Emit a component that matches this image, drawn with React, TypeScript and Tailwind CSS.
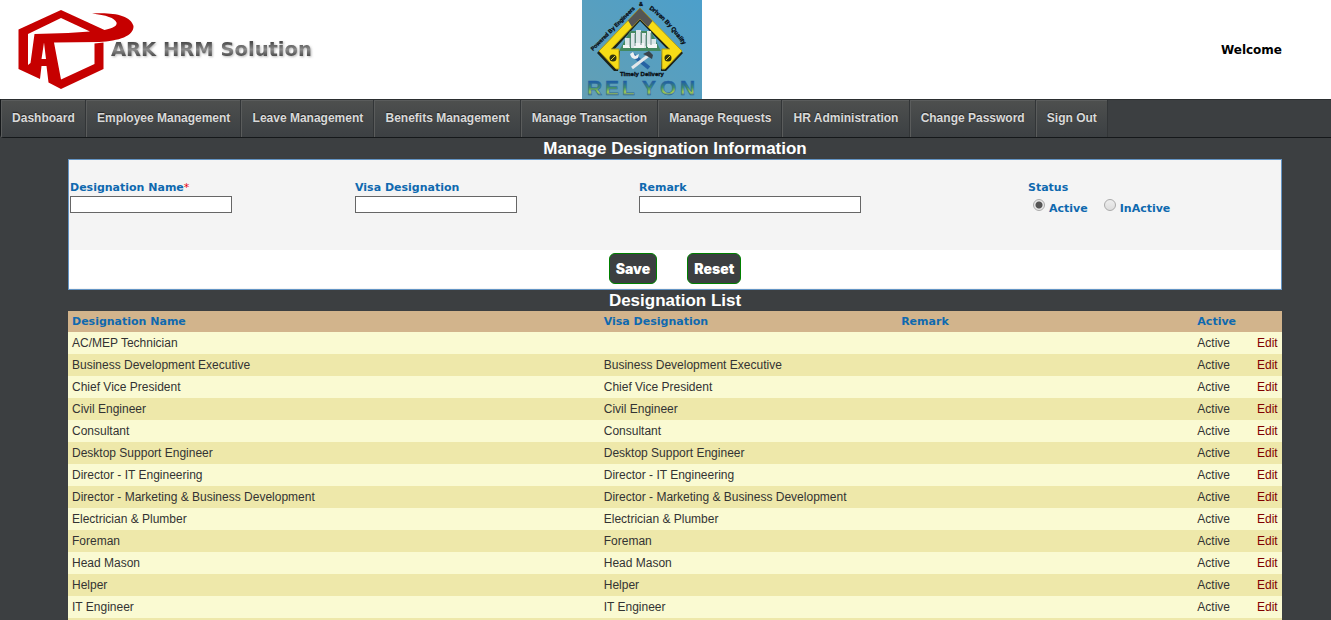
import React from "react";

const menu = [
  "Dashboard",
  "Employee Management",
  "Leave Management",
  "Benefits Management",
  "Manage Transaction",
  "Manage Requests",
  "HR Administration",
  "Change Password",
  "Sign Out",
];

const rows: [string, string][] = [
  ["AC/MEP Technician", ""],
  ["Business Development Executive", "Business Development Executive"],
  ["Chief Vice President", "Chief Vice President"],
  ["Civil Engineer", "Civil Engineer"],
  ["Consultant", "Consultant"],
  ["Desktop Support Engineer", "Desktop Support Engineer"],
  ["Director - IT Engineering", "Director - IT Engineering"],
  ["Director - Marketing & Business Development", "Director - Marketing & Business Development"],
  ["Electrician & Plumber", "Electrician & Plumber"],
  ["Foreman", "Foreman"],
  ["Head Mason", "Head Mason"],
  ["Helper", "Helper"],
  ["IT Engineer", "IT Engineer"],
];

function ArkLogo() {
  return (
    <svg className="block" width="330" height="99" viewBox="0 0 330 99" role="img" aria-label="ARK HRM Solution">
      <defs>
        <linearGradient id="word" x1="0" y1="0" x2="0" y2="1">
          <stop offset="0.2" stopColor="#4d4d4d" />
          <stop offset="0.5" stopColor="#8c8c8c" />
          <stop offset="0.8" stopColor="#4a4a4a" />
        </linearGradient>
        <filter id="soft" x="-5%" y="-20%" width="110%" height="150%">
          <feDropShadow dx="1" dy="1" stdDeviation="0.8" floodColor="#777" floodOpacity="0.5" />
        </filter>
      </defs>
      <path
        d="M18.500 29.500 L61 10 L104.500 30 C113 28 117.500 26 116.500 22.500 C115 18 106 15 92 13.500 C112 12 131 15 133.500 26 C134 36 119 41 99 42 L54 42.500 L61 79.500 L94.500 64 L94.500 43.500 L103.500 42.500 L103.500 69 L61 89 L48.500 82.500 L46.500 66 L41.500 66 L40 79 L18.500 69 Z M28 34 L28 65 L30.500 63 L34.500 34 L68 33 L90 31.500 L61 18 Z M44 42.500 L41.500 59 L46 59 Z"
        fill="#c60000"
        fillRule="evenodd"
      />
      <text x="111" y="56" fontFamily="DejaVu Sans, Verdana, sans-serif" fontSize="19.500" fontWeight="bold" fill="url(#word)" filter="url(#soft)">ARK HRM Solution</text>
    </svg>
  );
}

function RelyonLogo() {
  return (
    <svg className="block" width="120" height="99" viewBox="0 0 120 99" role="img" aria-label="Relyon, timely delivery">
      <defs>
        <linearGradient id="sky" x1="1" y1="0" x2="0" y2="1">
          <stop offset="0" stopColor="#4c9fcb" />
          <stop offset="1" stopColor="#639fb4" />
        </linearGradient>
        <linearGradient id="name" x1="0" y1="0" x2="0" y2="1">
          <stop offset="0.25" stopColor="#1e5ea5" />
          <stop offset="0.5" stopColor="#3f8e6c" />
          <stop offset="0.7" stopColor="#a5cb51" />
          <stop offset="0.9" stopColor="#245aa0" />
        </linearGradient>
        <path id="leftArc" d="M11 51 L60 2" />
        <path id="rightArc" d="M67 9 Q85 21 107 53" />
      </defs>
      <rect width="120" height="99" fill="url(#sky)" />
      <path d="M57 10 L15 53 L32 71 L36 71 L38 51 L31 51 L58 21 L87 51 L80 51 L79 71 L84 71 L101 53 Z" fill="#1b221a" />
      <path d="M58 8 L17 51 L34 69 L37 69 L37 49 L29 49 L58 19 L88 49 L80 49 L80 69 L83 69 L100 51 Z" fill="#f7dc16" stroke="#b3a012" strokeWidth="1" />
      <path d="M58 8 L46 20.500 L50 27 L58 19 L66 27 L70.500 21 Z" fill="#555554" />
      <g fill="#31340e"><circle cx="31" cy="58" r="3.500" /><circle cx="86" cy="58" r="3.500" /></g>
      <path d="M29 60 L33 56 M84 60 L88 56" stroke="#e8d72e" />
      <path d="M48 31 L69 31 L79 51 L37 51 Z" fill="#438961" />
      <g fill="#dce7e8">
        <path d="M43 38h5v10h-5z M49 33h4v15h-4z M54 30h5v16h-5z M60 33h4v15h-4z M65 31h4v16h-4z M69 39h5v9h-5z" />
        <path d="M41 45h7v3h-7z M52 43h10v5h-10z M66 44h9v4h-9z" fill="#f3f5f5" />
      </g>
      <path d="M48 38v9 M53 34v12 M59 32v13 M64 35v11 M69 33v12" stroke="#718c8f" />
      <path d="M51 55 L67 68" stroke="#2562a3" strokeWidth="4" />
      <path d="M67 55 L50 68" stroke="#e3e7e9" strokeWidth="3" />
      <path d="M61 54 L67 51 L71 55 L70 59 L65 56 Z" fill="#39444b" />
      <path d="M48 54 Q50 61 56 58 L57 54 L53 56 L51 52 Z" fill="#edf0f2" />
      <g fontFamily="Liberation Sans, Arial, sans-serif" fontWeight="bold" fontSize="5.500" fill="#080d13" stroke="#080d13" strokeWidth="0.300">
        <text><textPath href="#leftArc">Powered By Engineers</textPath></text>
        <text x="59" y="6" textAnchor="middle">&amp;</text>
        <text fontSize="6"><textPath href="#rightArc">Driven By Quality</textPath></text>
        <text x="60" y="76" fontSize="6" textAnchor="middle">Timely Delivery</text>
      </g>
      <text x="5 23 40 60 78 98" y="95" fontFamily="Liberation Sans, Arial, sans-serif" fontSize="21" fontWeight="bold" fill="url(#name)" stroke="#28649b" strokeWidth="0.500">RELYON</text>
    </svg>
  );
}

const labelClass = "block pt-0.5 font-['DejaVu_Sans',Verdana,sans-serif] text-[11px] leading-4 font-bold text-[#0f69af]";
const inputClass = "block h-[17px] border border-[#666] bg-white px-1 text-xs text-black outline-none";
const radioClass =
  "h-3 w-3 appearance-none rounded-full border border-[#aaa] bg-linear-to-b from-[#eee] to-[#ddd] checked:bg-[radial-gradient(circle,#555_0_3px,#e8e8e8_4px)]";
const buttonClass =
  "h-[31px] rounded-md border border-[#008000] bg-[#3c3f41] px-1.5 font-['Inter',sans-serif] text-sm font-black text-white";
const thClass = "px-1 pt-0.5 text-left font-['DejaVu_Sans',Verdana,sans-serif] text-[11px] font-bold text-[#0f69af]";

export default function App() {
  return (
    <div className="h-screen overflow-hidden bg-[#3c3f41] font-['Liberation_Sans',Arial,sans-serif] text-xs text-[#333]">
      <header className="grid h-[99px] grid-cols-[582fr_120px_629fr] bg-white">
        <ArkLogo />
        <RelyonLogo />
        <p className="pt-[42px] pr-[49px] text-right font-['DejaVu_Sans',Verdana,sans-serif] text-xs leading-4 font-bold text-black">
          Welcome
        </p>
      </header>

      <nav className="rounded-bl border-t border-b border-l border-t-[#2b2e30] border-b-[#15181a] border-l-[#15181a]">
        <ul className="flex h-[37px] max-w-[1107px]">
          {menu.map((m) => (
            <li key={m} className="grow border-r border-[#323537]">
              <a
                href="#"
                className="flex h-full items-center justify-center border-t border-l border-[#5a5c5c] bg-linear-to-b from-[#4d4f4e] to-[#3c4043] px-[10px] pb-0.5 font-bold whitespace-nowrap text-[#d9d9d9] [text-shadow:0_-1px_1px_#222]"
              >
                {m}
              </a>
            </li>
          ))}
        </ul>
      </nav>

      <main className="mr-[49px] ml-[68px]">
        <h1 className="h-[21px] text-center text-[17px] leading-[21px] font-bold text-white">Manage Designation Information</h1>
        <form className="border border-[#6495c5] bg-[#f4f4f4]" onSubmit={(e) => e.preventDefault()}>
          <div className="grid h-[90px] grid-cols-[285fr_284fr_389fr_254fr] pt-[18px]">
            <div className="pl-px">
              <label htmlFor="name" className={labelClass}>
                Designation Name<span className="font-normal text-red-600">*</span>
              </label>
              <input id="name" className={`${inputClass} w-[162px]`} />
            </div>
            <div className="pl-px">
              <label htmlFor="visa" className={labelClass}>Visa Designation</label>
              <input id="visa" className={`${inputClass} w-[162px]`} />
            </div>
            <div className="pl-px">
              <label htmlFor="remark" className={labelClass}>Remark</label>
              <input id="remark" className={`${inputClass} w-[222px]`} />
            </div>
            <fieldset className="pl-px">
              <legend className={labelClass}>Status</legend>
              <div className="flex gap-4 pt-[3px] pl-[5px]">
                <label className="flex gap-1">
                  <input type="radio" name="status" defaultChecked className={radioClass} />
                  <span className={labelClass}>Active</span>
                </label>
                <label className="flex gap-1">
                  <input type="radio" name="status" className={radioClass} />
                  <span className={labelClass}>InActive</span>
                </label>
              </div>
            </fieldset>
          </div>
          <div className="flex h-[39px] justify-center gap-[30px] border-b border-[#f4f4f4] bg-white pt-[3px]">
            <button type="submit" className={buttonClass}>Save</button>
            <button type="reset" className={buttonClass}>Reset</button>
          </div>
        </form>

        <h2 className="h-[21px] text-center text-[17px] leading-[21px] font-bold text-white">Designation List</h2>
        <table className="w-full table-fixed border-collapse">
          <colgroup>
            <col className="w-[43.8%]" />
            <col className="w-[24.5%]" />
            <col className="w-[24.4%]" />
            <col />
            <col className="w-[29px]" />
          </colgroup>
          <thead>
            <tr className="h-[21px] bg-[#d2b48c]">
              <th className={thClass}>Designation Name</th>
              <th className={thClass}>Visa Designation</th>
              <th className={thClass}>Remark</th>
              <th className={thClass}>Active</th>
              <th />
            </tr>
          </thead>
          <tbody>
            {rows.map(([name, visa]) => (
              <tr key={name} className="h-[22px] odd:bg-[#fafad2] even:bg-[#eee8aa]">
                <td className="px-1">{name}</td>
                <td className="px-1">{visa}</td>
                <td />
                <td className="px-1">Active</td>
                <td className="pl-1"><a href="#" className="text-[#800000]">Edit</a></td>
              </tr>
            ))}
            <tr className="h-[22px] bg-[#eee8aa]">
              <td colSpan={5} />
            </tr>
          </tbody>
        </table>
      </main>
    </div>
  );
}
